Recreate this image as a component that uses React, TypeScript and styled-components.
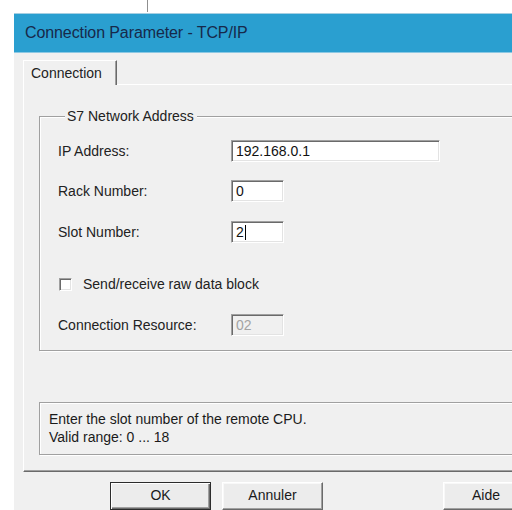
import * as React from "react";
import styled, { createGlobalStyle } from "styled-components";

const GlobalStyle = createGlobalStyle`
  html, body {
    margin: 0;
    padding: 0;
    background: #ffffff;
    overflow: hidden;
  }
  body {
    font-family: "Liberation Sans", Arial, sans-serif;
    font-size: 14px;
    color: #222222;
  }
`;

const Screen = styled.div`
  width: 512px;
  height: 510px;
  overflow: hidden;
  display: flex;
  flex-direction: column;
`;

const TopStrip = styled.div`
  height: 13px;
  flex-shrink: 0;
  display: flex;
`;

const WindowEdge = styled.div`
  margin-left: 147px;
  width: 1px;
  height: 12px;
  background: #8f8f8f;
`;

const Dialog = styled.div`
  margin-left: 14px;
  width: 560px;
  flex: 1;
  background: #f0f0f0;
  display: flex;
  flex-direction: column;
`;

const TitleBar = styled.div`
  height: 38px;
  flex-shrink: 0;
  border-top: 1px solid #a6cfe2;
  border-bottom: 1px solid #8cc8e3;
  background: #2a9fd0;
  display: flex;
  align-items: center;
  padding-left: 11px;
  font-size: 16px;
  color: #17294a;
  letter-spacing: -0.1px;
`;

const Body = styled.div`
  padding: 7px 0 0 9px;
  display: flex;
  flex-direction: column;
`;

const TabStrip = styled.div`
  display: flex;
  position: relative;
  z-index: 1;
`;

const Tab = styled.div`
  width: 94px;
  height: 25px;
  margin-bottom: -1px;
  padding-left: 7px;
  box-sizing: border-box;
  display: flex;
  align-items: center;
  background: #f0f0f0;
  border-top: 1px solid #ffffff;
  border-left: 1px solid #ffffff;
  border-right: 1px solid #6a6a6a;
  box-shadow: inset -1px 0 0 #a0a0a0;
`;

const TabPanel = styled.div`
  border-top: 1px solid #ffffff;
  border-left: 1px solid #ffffff;
  border-bottom: 1px solid #6a6a6a;
  box-shadow: inset 0 -1px 0 #a0a0a0;
  padding: 23px 0 16px 15px;
  display: flex;
  flex-direction: column;
`;

const GroupBox = styled.fieldset`
  margin: 0;
  padding: 16px 0 14px 18px;
  border: 1px solid #a0a0a0;
  box-shadow: inset 1px 1px 0 #ffffff, 1px 1px 0 #ffffff;
  display: flex;
  flex-direction: column;
`;

const GroupTitle = styled.legend`
  margin-left: 7px;
  padding: 0 3px 0 2px;
  line-height: 16px;
  background: #f0f0f0;
`;

const Row = styled.div<{ $top?: number }>`
  height: 22px;
  margin-top: ${(p) => p.$top ?? 0}px;
  display: flex;
  align-items: center;
`;

const Label = styled.span`
  width: 173px;
  flex-shrink: 0;
`;

const Field = styled.div<{ $width: number; $disabled?: boolean }>`
  width: ${(p) => p.$width}px;
  height: 22px;
  box-sizing: border-box;
  padding: 0 0 0 4px;
  display: flex;
  align-items: center;
  background: ${(p) => (p.$disabled ? "#f0f0f0" : "#ffffff")};
  color: ${(p) => (p.$disabled ? "#a3a3a3" : "#111111")};
  border: 1px solid;
  border-color: #a0a0a0 #ffffff #ffffff #a0a0a0;
  box-shadow: inset 1px 1px 0 #6a6a6a, inset -1px -1px 0 #e3e3e3;
`;

const Caret = styled.span`
  width: 1px;
  height: 15px;
  margin-left: 1px;
  background: #000000;
`;

const CheckRow = styled.label`
  height: 22px;
  margin-top: 30px;
  padding-left: 1px;
  display: flex;
  align-items: center;
  gap: 11px;
`;

const CheckBox = styled.span`
  width: 13px;
  height: 13px;
  box-sizing: border-box;
  background: #ffffff;
  border: 1px solid;
  border-color: #a0a0a0 #ffffff #ffffff #a0a0a0;
  box-shadow: inset 1px 1px 0 #6a6a6a, inset -1px -1px 0 #e3e3e3;
`;

const InfoBox = styled.div`
  margin-top: 51px;
  padding: 7px 0 8px 9px;
  line-height: 18px;
  border: 1px solid #a0a0a0;
  box-shadow: inset 1px 1px 0 #ffffff, 1px 1px 0 #ffffff;
  color: #1a1a1a;
`;

const ButtonRow = styled.div`
  display: flex;
  gap: 11px;
  padding: 10px 0 0 87px;
`;

const Button = styled.div<{ $primary?: boolean; $push?: number; $width?: number }>`
  width: ${(p) => p.$width ?? 101}px;
  height: 28px;
  margin-left: ${(p) => p.$push ?? 0}px;
  box-sizing: border-box;
  padding-bottom: 2px;
  display: flex;
  align-items: center;
  justify-content: center;
  background: #ececec;
  color: #1a1a1a;
  border: 1px solid;
  border-color: ${(p) =>
    p.$primary ? "#2c2c2c" : "#ffffff #6a6a6a #6a6a6a #ffffff"};
  box-shadow: ${(p) =>
    p.$primary
      ? "inset 1px 1px 0 #ffffff, inset -1px -1px 0 #6a6a6a, inset -2px -2px 0 #a0a0a0"
      : "inset -1px -1px 0 #a0a0a0, inset 1px 1px 0 #f8f8f8"};
`;

interface FieldProps {
  label: string;
  value: string;
  width: number;
  top?: number;
  caret?: boolean;
  disabled?: boolean;
}

const FieldRow = (props: FieldProps) => (
  <Row $top={props.top}>
    <Label>{props.label}</Label>
    <Field $width={props.width} $disabled={props.disabled}>
      {props.value}
      {props.caret && <Caret />}
    </Field>
  </Row>
);

const App = () => (
  <Screen>
    <GlobalStyle />
    <TopStrip>
      <WindowEdge />
    </TopStrip>
    <Dialog>
      <TitleBar>Connection Parameter - TCP/IP</TitleBar>
      <Body>
        <TabStrip>
          <Tab>Connection</Tab>
        </TabStrip>
        <TabPanel>
          <GroupBox>
            <GroupTitle>S7 Network Address</GroupTitle>
            <FieldRow label="IP Address:" value="192.168.0.1" width={209} />
            <FieldRow label="Rack Number:" value="0" width={53} top={18} />
            <FieldRow label="Slot Number:" value="2" width={53} top={19} caret />
            <CheckRow>
              <CheckBox />
              Send/receive raw data block
            </CheckRow>
            <FieldRow
              label="Connection Resource:"
              value="02"
              width={53}
              top={19}
              disabled
            />
          </GroupBox>
          <InfoBox>
            Enter the slot number of the remote CPU.
            <br />
            Valid range: 0 ... 18
          </InfoBox>
        </TabPanel>
        <ButtonRow>
          <Button $primary>OK</Button>
          <Button>Annuler</Button>
          <Button $push={109} $width={86}>
            Aide
          </Button>
        </ButtonRow>
      </Body>
    </Dialog>
  </Screen>
);

export default App;
